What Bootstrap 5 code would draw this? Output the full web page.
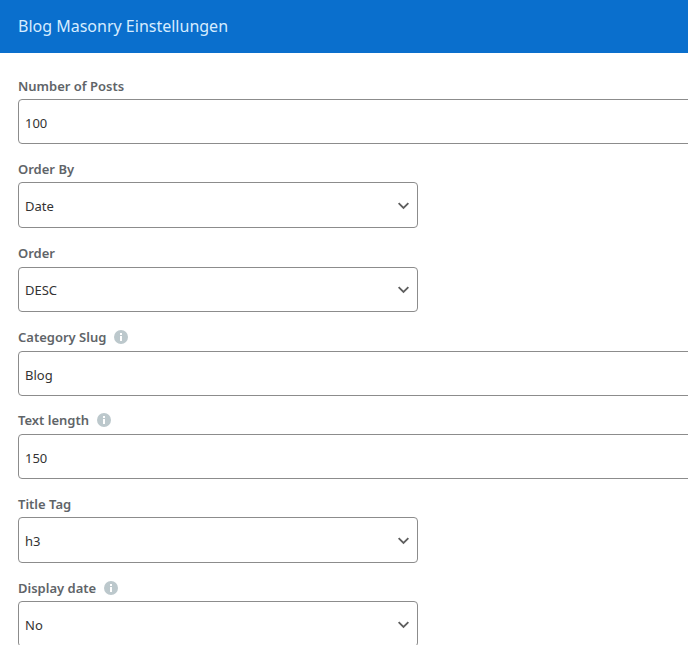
<!DOCTYPE html>
<html lang="en">

<head>
  <meta charset="UTF-8" />
  <meta name="viewport" content="width=device-width, initial-scale=1.0" />
  <title>Blog Masonry Einstellungen</title>
  <link href="https://cdn.jsdelivr.net/npm/bootstrap@5.3.0/dist/css/bootstrap.min.css" rel="stylesheet">
  <script src="https://cdn.jsdelivr.net/npm/bootstrap@5.3.0/dist/js/bootstrap.bundle.min.js"></script>
  <style>
    html, body {
      height: 100%;
      overflow: hidden;
    }
    body {
      font-family: "Noto Sans", "Open Sans", sans-serif;
      background-color: #fff;
    }
    .panel-head {
      height: 53px;
      background-color: #0a6fcd;
      color: #d6ecff;
      font-size: 16px;
      padding: 0 0 2px 18px;
    }
    .panel-body {
      padding: 23.6px 0 0 18px;
      overflow: hidden;
    }
    .field {
      margin-bottom: 15.8px;
    }
    .field-label {
      color: #606468;
      font-size: 13px;
      font-weight: 600;
      line-height: 18px;
      margin-bottom: 4.6px;
    }
    .field .form-control,
    .field .form-select {
      height: 44.8px;
      border: 1px solid #8c8c8c;
      border-radius: 4px;
      color: #333;
      font-size: 13px;
      padding: 3px 6px 0;
    }
    .field .form-control {
      width: 720px;
    }
    .field .form-select {
      width: 400px;
      height: 45.8px;
      background-image: url("data:image/svg+xml,%3csvg xmlns='http://www.w3.org/2000/svg' viewBox='0 0 16 16'%3e%3cpath fill='none' stroke='%23606060' stroke-width='2.2' d='M2 5l6 6 6-6'/%3e%3c/svg%3e");
      background-position: right 7px center;
      background-size: 13px 13px;
    }
    .info-dot {
      width: 14px;
      height: 14px;
    }
  </style>
</head>

<body>
  <div class="panel-head d-flex align-items-center">Blog Masonry Einstellungen</div>

  <div class="panel-body">
    <div class="field">
      <div class="field-label">Number of Posts</div>
      <input type="text" class="form-control" value="100" />
    </div>
    <div class="field">
      <div class="field-label">Order By</div>
      <select class="form-select"><option>Date</option></select>
    </div>
    <div class="field">
      <div class="field-label">Order</div>
      <select class="form-select"><option>DESC</option></select>
    </div>
    <div class="field">
      <div class="field-label d-flex align-items-center gap-2">Category Slug
        <svg class="info-dot" viewBox="0 0 14 14"><circle cx="7" cy="7" r="7" fill="#bcc8cc"/><rect x="6" y="6" width="2" height="5" fill="#fff"/><rect x="6" y="3" width="2" height="2" fill="#fff"/></svg>
      </div>
      <input type="text" class="form-control" value="Blog" />
    </div>
    <div class="field">
      <div class="field-label d-flex align-items-center gap-2">Text length
        <svg class="info-dot" viewBox="0 0 14 14"><circle cx="7" cy="7" r="7" fill="#bcc8cc"/><rect x="6" y="6" width="2" height="5" fill="#fff"/><rect x="6" y="3" width="2" height="2" fill="#fff"/></svg>
      </div>
      <input type="text" class="form-control" value="150" />
    </div>
    <div class="field">
      <div class="field-label">Title Tag</div>
      <select class="form-select"><option>h3</option></select>
    </div>
    <div class="field">
      <div class="field-label d-flex align-items-center gap-2">Display date
        <svg class="info-dot" viewBox="0 0 14 14"><circle cx="7" cy="7" r="7" fill="#bcc8cc"/><rect x="6" y="6" width="2" height="5" fill="#fff"/><rect x="6" y="3" width="2" height="2" fill="#fff"/></svg>
      </div>
      <select class="form-select"><option>No</option></select>
    </div>
  </div>
</body>

</html>
